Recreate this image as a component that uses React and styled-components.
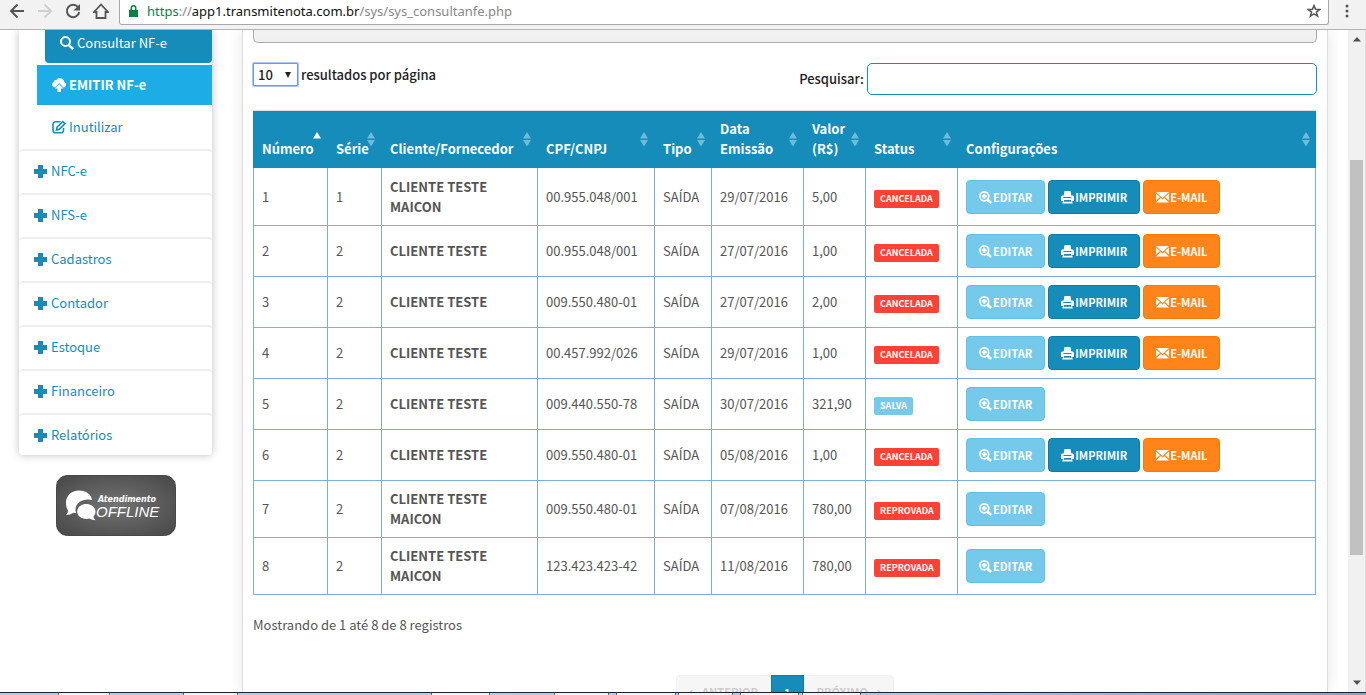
import React from 'react';
import styled, { createGlobalStyle } from 'styled-components';

const blue = '#158cba';
const line = '#7cacec';

const GlobalStyle = createGlobalStyle`
    * {
        box-sizing: border-box;
    }

    body {
        margin: 0;
        color: #555;
        background: #fff;
        font-family: 'Noto Sans CJK SC', 'Noto Sans', sans-serif;
        font-size: 13px;
        line-height: 20px;
    }

    a {
        text-decoration: none;
    }

    button,
    input,
    select {
        font-family: inherit;
    }

    svg {
        display: block;
        flex: none;
    }
`;

const Window = styled.div`
    display: flex;
    flex-direction: column;
    height: 100vh;
    overflow: hidden;
`;

const Toolbar = styled.header`
    flex: none;
    display: flex;
    align-items: flex-start;
    height: 30px;
    background: #f2f2f2;
    border-bottom: 1px solid #b4b4b4;
`;

const NavButtons = styled.div`
    display: flex;
    gap: 12px;
    padding: 3px 10px 0 9px;
`;

const IconButton = styled.button`
    display: block;
    padding: 0;
    border: 0;
    background: none;
    color: ${(props) => (props.disabled ? '#d0d0d0' : '#555')};
`;

const AddressBar = styled.div`
    flex: 1;
    display: flex;
    align-items: center;
    height: 25px;
    padding: 0 7px 2px 9px;
    background: #fff;
    border: 1px solid #a8a8a8;
    border-top: 0;
    border-radius: 0 0 3px 3px;
`;

const Url = styled.div`
    flex: 1;
    margin-left: 9px;
    color: #888;
    font-family: 'Noto Sans', sans-serif;
    font-size: 13px;
`;

const Scheme = styled.span`
    color: #0b8043;
`;

const Host = styled.span`
    color: #111;
`;

const MenuSlot = styled.div`
    padding: 3px 10px 0 9px;
`;

const Viewport = styled.div`
    flex: 1;
    display: flex;
    min-height: 0;
`;

const Page = styled.div`
    flex: 1;
    display: flex;
    gap: 30px;
    min-width: 0;
    padding: 0 20px 0 19px;
    overflow: hidden;
`;

const Sidebar = styled.aside`
    flex: none;
    width: 193px;
`;

const Menu = styled.nav`
    background: #fff;
    border-radius: 0 0 4px 4px;
    box-shadow: 0 0 8px rgba(0, 0, 0, 0.25);
`;

const SubMenu = styled.div`
    display: flex;
    flex-direction: column;
    gap: 2px;
    padding: 0 0 2px 18px;
`;

const SubItem = styled.a`
    display: flex;
    align-items: center;
    gap: 3px;
    height: 40px;
    padding-left: 15px;
    color: ${blue};
`;

const ActiveItem = styled(SubItem)`
    height: 33px;
    margin-left: 8px;
    padding-bottom: 7px;
    color: #fff;
    background: ${blue};
    border-radius: 0 0 4px 4px;
`;

const EmitItem = styled(SubItem)`
    color: #fff;
    background: #1dade6;
    font-weight: 700;
`;

const MenuItem = styled.a`
    display: flex;
    align-items: center;
    gap: 4px;
    padding: 10px 15px 12px;
    color: ${blue};
    border-top: 2px solid #eee;
    border-radius: 4px;

    &:last-child {
        padding-bottom: 10px;
    }
`;

const Support = styled.button`
    display: block;
    width: 120px;
    margin: 20px auto 0;
    padding: 0;
    border: 0;
    background: none;
`;

const Panel = styled.main`
    flex: 1;
    min-width: 0;
    padding: 0 10px;
    border: 1px solid #ddd;
    border-width: 0 1px;
    box-shadow: 0 0 14px rgba(0, 0, 0, 0.1);
`;

const FilterBox = styled.div`
    height: 13px;
    background: linear-gradient(#f3f3f3, #eee);
    border: 1px solid #aaa;
    border-top: 0;
    border-radius: 0 0 5px 5px;
`;

const Controls = styled.div`
    display: flex;
    justify-content: space-between;
    align-items: flex-start;
    padding: 20px 0 15px;
    color: #222;
    font-weight: 500;
`;

const LengthLabel = styled.label`
    display: flex;
    align-items: center;
    gap: 3px;
`;

const LengthBox = styled.span`
    display: flex;
    align-items: center;
    width: 45px;
    height: 23px;
    padding: 0 6px 0 0;
    background: #fff;
    border: 1px solid #6f97dd;
    border-radius: 1px;
    box-shadow: 0 0 0 1px #a9c7f7;
`;

const LengthSelect = styled.select`
    flex: 1;
    min-width: 0;
    padding: 0 0 0 4px;
    appearance: none;
    border: 0;
    outline: 0;
    background: none;
    color: #222;
    font-size: 13px;
    font-weight: 500;
`;

const SearchLabel = styled.label`
    display: flex;
    align-items: center;
    gap: 3px;
`;

const SearchInput = styled.input`
    width: 450px;
    height: 32px;
    padding: 0 8px;
    border: 1px solid ${blue};
    border-radius: 5px;
    outline: 0;
`;

const TableWrapper = styled.div`
    padding-right: 1px;
`;

const Table = styled.table`
    width: 100%;
    table-layout: fixed;
    border-spacing: 0;
    border-top: 1px solid #ddd;
`;

const Col = styled.col`
    width: ${(props) => props.$width};
`;

const HeadCell = styled.th`
    padding: 8px 6px 9px 9px;
    background: ${blue};
    color: #fff;
    text-align: left;
`;

const HeadContent = styled.div`
    display: flex;
    align-items: flex-end;
    justify-content: space-between;
    height: 40px;
`;

const HeadText = styled.span`
    min-width: 0;
`;

const SortSlot = styled.span`
    align-self: center;
    flex: none;
`;

const Cell = styled.td`
    padding: 8px;
    border: solid ${line};
    border-width: 0 0 1px 1px;

    &:last-child {
        border-right-width: 1px;
    }

    tr:first-child > & {
        padding-top: 9px;
    }
`;

const Client = styled(Cell)`
    font-weight: 700;
`;

const Badge = styled.span`
    display: block;
    width: fit-content;
    margin-top: 3px;
    padding: 0 6px;
    color: #fff;
    background: ${(props) => (props.$saved ? '#75caeb' : '#ff4136')};
    border-radius: 2px;
    font-size: 9px;
    font-weight: 700;
    line-height: 18px;
`;

const Actions = styled.div`
    display: flex;
    gap: 3px;
`;

const tones = {
    info: ['#75caeb', '#5fc1e8'],
    primary: [blue, '#127ba3'],
    warning: ['#ff851b', '#ff7701'],
};

const ActionButton = styled.button`
    display: flex;
    align-items: center;
    gap: 1px;
    height: 34px;
    padding: 0 12px;
    color: #fff;
    background: ${(props) => tones[props.$tone][0]};
    border: 1px solid ${(props) => tones[props.$tone][1]};
    border-radius: 4px;
    font-size: 11px;
    font-weight: 700;
`;

const Info = styled.p`
    margin: 20px 0 40px;
`;

const Pagination = styled.nav`
    display: flex;
    justify-content: center;
`;

const PageButton = styled.button`
    height: 34px;
    padding: 0 12px;
    color: ${(props) => (props.$current ? '#fff' : '#ccc')};
    background: ${(props) => (props.$current ? blue : '#f6f6f6')};
    border: 1px solid ${(props) => (props.$current ? '#127ba3' : '#f0f0f0')};
    font-size: 11px;
    font-weight: 700;

    &:first-child {
        border-radius: 4px 0 0 4px;
    }

    &:last-child {
        border-radius: 0 4px 4px 0;
    }
`;

const Scrollbar = styled.div`
    flex: none;
    display: flex;
    flex-direction: column;
    align-items: center;
    width: 18px;
    padding: 7px 2px 7px 2px;
    background: #f1f1f1;
    border-right: 1px solid #ddd;
`;

const Track = styled.div`
    flex: 1;
    display: grid;
    grid-template-rows: 118fr 395fr 125fr;
    width: 100%;
`;

const Thumb = styled.div`
    grid-row: 2;
    background: #c1c1c1;
`;

const Taskbar = styled.footer`
    flex: none;
    display: flex;
    height: 3px;
    background: linear-gradient(90deg, #b4cce6 60%, #8ba3c0);
    border-top: 1px solid #1c2430;
`;

const TaskGap = styled.span`
    width: ${(props) => props.$width}px;
`;

const TaskTab = styled.span`
    width: ${(props) => props.$width}px;
    background: #eef3fa;
    border: 1px solid #5d6b80;
    border-width: 0 1px;
`;

const icons = {
    plus: <path d='M4 0h5v4h4v5H9v4H4V9H0V4h4z' />,
    search: (
        <path
            fillRule='evenodd'
            d='M5.500 0a5.500 5.500 0 0 1 4.600 8.400l3.900 3.800-1.800 1.800-3.900-3.800A5.500 5.500 0 1 1 5.500 0zm0 2a3.500 3.500 0 1 0 0 7 3.500 3.500 0 0 0 0-7z'
        />
    ),
    upload: (
        <path d='M3 9.600A3 3 0 0 1 1.600 4 2.400 2.400 0 0 1 4.200 2 4.400 4.400 0 0 1 12.200 4a2.900 2.900 0 0 1-.7 5.600L7.200 5zM7.200 6.300l4.300 4.300H9V14H5.500v-3.400H3z' />
    ),
    edit: (
        <g fill='none' stroke='currentColor' strokeWidth='1.600'>
            <path d='M8.500 1.800H3.500A2.500 2.500 0 0 0 1 4.300v6a2.500 2.500 0 0 0 2.500 2.500h5.500a2.500 2.500 0 0 0 2.500-2.500V8' />
            <path d='M4.500 10l.6-2.800L10.800 1.500 13 3.600 7.200 9.400z' />
        </g>
    ),
    zoom: (
        <>
            <path
                fillRule='evenodd'
                d='M5.300 0a5.300 5.300 0 0 1 4.500 8l3.200 3-1.700 2-3.500-3A5.300 5.300 0 1 1 5.300 0zm0 1.700a3.600 3.600 0 1 0 0 7.200 3.600 3.600 0 0 0 0-7.200z'
            />
            <path d='M4.300 2.800h2v1.500h1.500v2H6.300v1.500h-2V6.300H2.800v-2h1.500z' />
        </>
    ),
    print: (
        <path
            fillRule='evenodd'
            d='M3.500 0h6l.8 4.500H12l1 1.200V10h-2l.8 2.500H1.200L2 10H0V5.700l1-1.200h1.700zM2.500 6v1h8V6zm.7 3-.7 1.800h8L9.800 9z'
        />
    ),
    mail: (
        <>
            <path d='M0 1h13L6.500 7z' />
            <path d='M0 2.500 4 6 0 9.800zM13 2.500 9 6l4 3.800z' />
            <path d='M0 11.500 4.800 6.900l1.700 1.500 1.700-1.500L13 11.500z' />
        </>
    ),
};

const Icon = ({ name, size = 13 }) => (
    <svg
        width={size}
        height={size}
        viewBox={`0 0 ${size} ${size}`}
        fill='currentColor'
        aria-hidden='true'
    >
        {icons[name]}
    </svg>
);

const SortIcon = ({ active }) => (
    <svg width='8' height='14' viewBox='0 0 8 14' aria-hidden='true'>
        <path d='M0 6.500 4 0l4 6.500z' fill='#fff' opacity={active ? 1 : 0.4} />
        {!active && <path d='M0 8h8l-4 6.500z' fill='#fff' opacity='0.4' />}
    </svg>
);

const OfflineArt = () => (
    <svg width='120' height='61' viewBox='0 0 120 61' aria-hidden='true'>
        <defs>
            <radialGradient id='support' cx='50%' cy='50%' r='65%'>
                <stop offset='0' stopColor='#737373' />
                <stop offset='1' stopColor='#4a4a4a' />
            </radialGradient>
        </defs>
        <rect x='0.500' y='0.500' width='119' height='60' rx='11' fill='url(#support)' stroke='#484848' />
        <path
            fill='#fff'
            d='M23 15.500c7 0 12.500 4 13 9.500-8-2-16 2-16.500 9 0 2 .3 3 .8 4l-3-.3c-2 1.500-4.500 2.200-7.300 2.300 1.500-1.500 2-3 2-4.500C10.500 33.500 10 30.500 10 27.500 10 21 15.500 15.500 23 15.500z'
        />
        <path
            fill='#fff'
            d='M30 29c5.500 0 9.500 3.300 9.500 7.500 0 2-.8 3.700-2 5 .1 1.500.8 2.500 2 3.700-2.300 0-4.300-.5-5.800-1.600-7 1.500-12.500-2-12.500-7C21.200 32.300 25 29 30 29z'
        />
        <text x='42' y='27' fill='#fff' fontFamily='DejaVu Sans, sans-serif' fontSize='8' fontWeight='700' fontStyle='italic'>
            Atendimento
        </text>
        <text x='40' y='42' fill='#fff' fontFamily='Liberation Sans, sans-serif' fontSize='15' fontStyle='italic'>
            OFFLINE
        </text>
    </svg>
);

const menuItems = ['NFC-e', 'NFS-e', 'Cadastros', 'Contador', 'Estoque', 'Financeiro', 'Relatórios'];

// gap before each task button, then the button's own width
const tasks = [
    [58, 52],
    [73, 55],
    [193, 59],
    [64, 55],
    [7, 60],
    [2, 55],
    [7, 59],
    [3, 59],
];

const columns = [
    { label: 'Número', width: '74px', active: true },
    { label: 'Série', width: '54px' },
    { label: 'Cliente/Fornecedor', width: '156px' },
    { label: 'CPF/CNPJ', width: '117px' },
    { label: 'Tipo', width: '57px' },
    { label: 'Data Emissão', width: '92px' },
    { label: 'Valor (R$)', width: '62px' },
    { label: 'Status', width: '92px' },
    { label: 'Configurações', width: 'auto' },
];

const notes = [
    { id: 1, serie: 1, client: 'CLIENTE TESTE MAICON', doc: '00.955.048/001', date: '29/07/2016', value: '5,00', status: 'CANCELADA' },
    { id: 2, serie: 2, client: 'CLIENTE TESTE', doc: '00.955.048/001', date: '27/07/2016', value: '1,00', status: 'CANCELADA' },
    { id: 3, serie: 2, client: 'CLIENTE TESTE', doc: '009.550.480-01', date: '27/07/2016', value: '2,00', status: 'CANCELADA' },
    { id: 4, serie: 2, client: 'CLIENTE TESTE', doc: '00.457.992/026', date: '29/07/2016', value: '1,00', status: 'CANCELADA' },
    { id: 5, serie: 2, client: 'CLIENTE TESTE', doc: '009.440.550-78', date: '30/07/2016', value: '321,90', status: 'SALVA' },
    { id: 6, serie: 2, client: 'CLIENTE TESTE', doc: '009.550.480-01', date: '05/08/2016', value: '1,00', status: 'CANCELADA' },
    { id: 7, serie: 2, client: 'CLIENTE TESTE MAICON', doc: '009.550.480-01', date: '07/08/2016', value: '780,00', status: 'REPROVADA' },
    { id: 8, serie: 2, client: 'CLIENTE TESTE MAICON', doc: '123.423.423-42', date: '11/08/2016', value: '780,00', status: 'REPROVADA' },
];

const BrowserBar = () => (
    <Toolbar>
        <NavButtons>
            <IconButton aria-label='Voltar'>
                <svg width='16' height='16' viewBox='0 0 16 16' fill='none' stroke='currentColor' strokeWidth='2'>
                    <path d='M15 8H2M8.500 1.500 2 8l6.500 6.500' />
                </svg>
            </IconButton>
            <IconButton aria-label='Avançar' disabled>
                <svg width='16' height='16' viewBox='0 0 16 16' fill='none' stroke='currentColor' strokeWidth='2'>
                    <path d='M1 8h13M7.500 1.500 14 8l-6.500 6.500' />
                </svg>
            </IconButton>
            <IconButton aria-label='Recarregar'>
                <svg width='16' height='16' viewBox='0 0 16 16' fill='none' stroke='currentColor' strokeWidth='2'>
                    <path d='M13 4.200A6.200 6.200 0 1 0 14.200 9' />
                    <path d='M15 1v6.500H8.500z' fill='currentColor' stroke='none' />
                </svg>
            </IconButton>
            <IconButton aria-label='Página inicial'>
                <svg width='16' height='16' viewBox='0 0 16 16' fill='none' stroke='currentColor' strokeWidth='1.800'>
                    <path d='M1 9 8 1.500 15 9h-2.500v6h-9V9z' />
                </svg>
            </IconButton>
        </NavButtons>
        <AddressBar>
            <svg width='9' height='12' viewBox='0 0 9 12' fill='#0b8043'>
                <path fillRule='evenodd' d='M1.500 5V3a3 3 0 0 1 6 0v2H9v7H0V5zm1.500 0h3V3a1.500 1.500 0 0 0-3 0z' />
            </svg>
            <Url>
                <Scheme>https</Scheme>://<Host>app1.transmitenota.com.br</Host>/sys/sys_consultanfe.php
            </Url>
            <IconButton aria-label='Favoritar'>
                <svg width='14' height='14' viewBox='0 0 14 14' fill='none' stroke='currentColor' strokeWidth='1.500'>
                    <path d='M7 1.500 8.500 5.300l4.200.2-3.300 2.600 1.200 4L7 9.800l-3.600 2.300 1.200-4L1.300 5.500l4.200-.2z' />
                </svg>
            </IconButton>
        </AddressBar>
        <MenuSlot>
            <IconButton aria-label='Menu'>
                <svg width='18' height='16' viewBox='0 0 18 16' fill='currentColor'>
                    <circle cx='9' cy='3' r='1.500' />
                    <circle cx='9' cy='8' r='1.500' />
                    <circle cx='9' cy='13' r='1.500' />
                </svg>
            </IconButton>
        </MenuSlot>
    </Toolbar>
);

const NoteRow = ({ note }) => (
    <tr>
        <Cell>{note.id}</Cell>
        <Cell>{note.serie}</Cell>
        <Client>{note.client}</Client>
        <Cell>{note.doc}</Cell>
        <Cell>SAÍDA</Cell>
        <Cell>{note.date}</Cell>
        <Cell>{note.value}</Cell>
        <Cell>
            <Badge $saved={note.status === 'SALVA'}>{note.status}</Badge>
        </Cell>
        <Cell>
            <Actions>
                <ActionButton $tone='info'>
                    <Icon name='zoom' />
                    EDITAR
                </ActionButton>
                {note.status === 'CANCELADA' && (
                    <>
                        <ActionButton $tone='primary'>
                            <Icon name='print' />
                            IMPRIMIR
                        </ActionButton>
                        <ActionButton $tone='warning'>
                            <Icon name='mail' />
                            E-MAIL
                        </ActionButton>
                    </>
                )}
            </Actions>
        </Cell>
    </tr>
);

const App = () => (
    <Window>
        <GlobalStyle />
        <BrowserBar />
        <Viewport>
            <Page>
                <Sidebar>
                    <Menu>
                        <SubMenu>
                            <ActiveItem href='#consultar'>
                                <Icon name='search' size={14} />
                                Consultar NF-e
                            </ActiveItem>
                            <EmitItem href='#emitir'>
                                <Icon name='upload' size={14} />
                                EMITIR NF-e
                            </EmitItem>
                            <SubItem href='#inutilizar'>
                                <Icon name='edit' size={14} />
                                Inutilizar
                            </SubItem>
                        </SubMenu>
                        {menuItems.map((label) => (
                            <MenuItem key={label} href='#menu'>
                                <Icon name='plus' />
                                {label}
                            </MenuItem>
                        ))}
                    </Menu>
                    <Support aria-label='Atendimento offline'>
                        <OfflineArt />
                    </Support>
                </Sidebar>
                <Panel>
                    <FilterBox />
                    <Controls>
                        <LengthLabel>
                            <LengthBox>
                                <LengthSelect defaultValue='10'>
                                    <option>10</option>
                                    <option>25</option>
                                    <option>50</option>
                                </LengthSelect>
                                <svg width='6' height='6' viewBox='0 0 6 6'>
                                    <path d='M0 0h6L3 6z' fill='#222' />
                                </svg>
                            </LengthBox>
                            resultados por página
                        </LengthLabel>
                        <SearchLabel>
                            Pesquisar:
                            <SearchInput type='search' />
                        </SearchLabel>
                    </Controls>
                    <TableWrapper>
                        <Table>
                            <colgroup>
                                {columns.map((column) => (
                                    <Col key={column.label} $width={column.width} />
                                ))}
                            </colgroup>
                            <thead>
                                <tr>
                                    {columns.map((column) => (
                                        <HeadCell key={column.label}>
                                            <HeadContent>
                                                <HeadText>{column.label}</HeadText>
                                                <SortSlot>
                                                    <SortIcon active={column.active} />
                                                </SortSlot>
                                            </HeadContent>
                                        </HeadCell>
                                    ))}
                                </tr>
                            </thead>
                            <tbody>
                                {notes.map((note) => (
                                    <NoteRow key={note.id} note={note} />
                                ))}
                            </tbody>
                        </Table>
                    </TableWrapper>
                    <Info>Mostrando de 1 até 8 de 8 registros</Info>
                    <Pagination>
                        <PageButton disabled>← ANTERIOR</PageButton>
                        <PageButton $current>1</PageButton>
                        <PageButton disabled>PRÓXIMO →</PageButton>
                    </Pagination>
                </Panel>
            </Page>
            <Scrollbar>
                <svg width='8' height='5' viewBox='0 0 8 5'>
                    <path d='M0 4.500 4 0l4 4.500z' fill='#505050' />
                </svg>
                <Track>
                    <Thumb />
                </Track>
                <svg width='8' height='5' viewBox='0 0 8 5'>
                    <path d='M0 .5h8L4 5z' fill='#505050' />
                </svg>
            </Scrollbar>
        </Viewport>
        <Taskbar>
            {tasks.map(([gap, width], index) => (
                <React.Fragment key={index}>
                    <TaskGap $width={gap} />
                    <TaskTab $width={width} />
                </React.Fragment>
            ))}
        </Taskbar>
    </Window>
);

export default App;
